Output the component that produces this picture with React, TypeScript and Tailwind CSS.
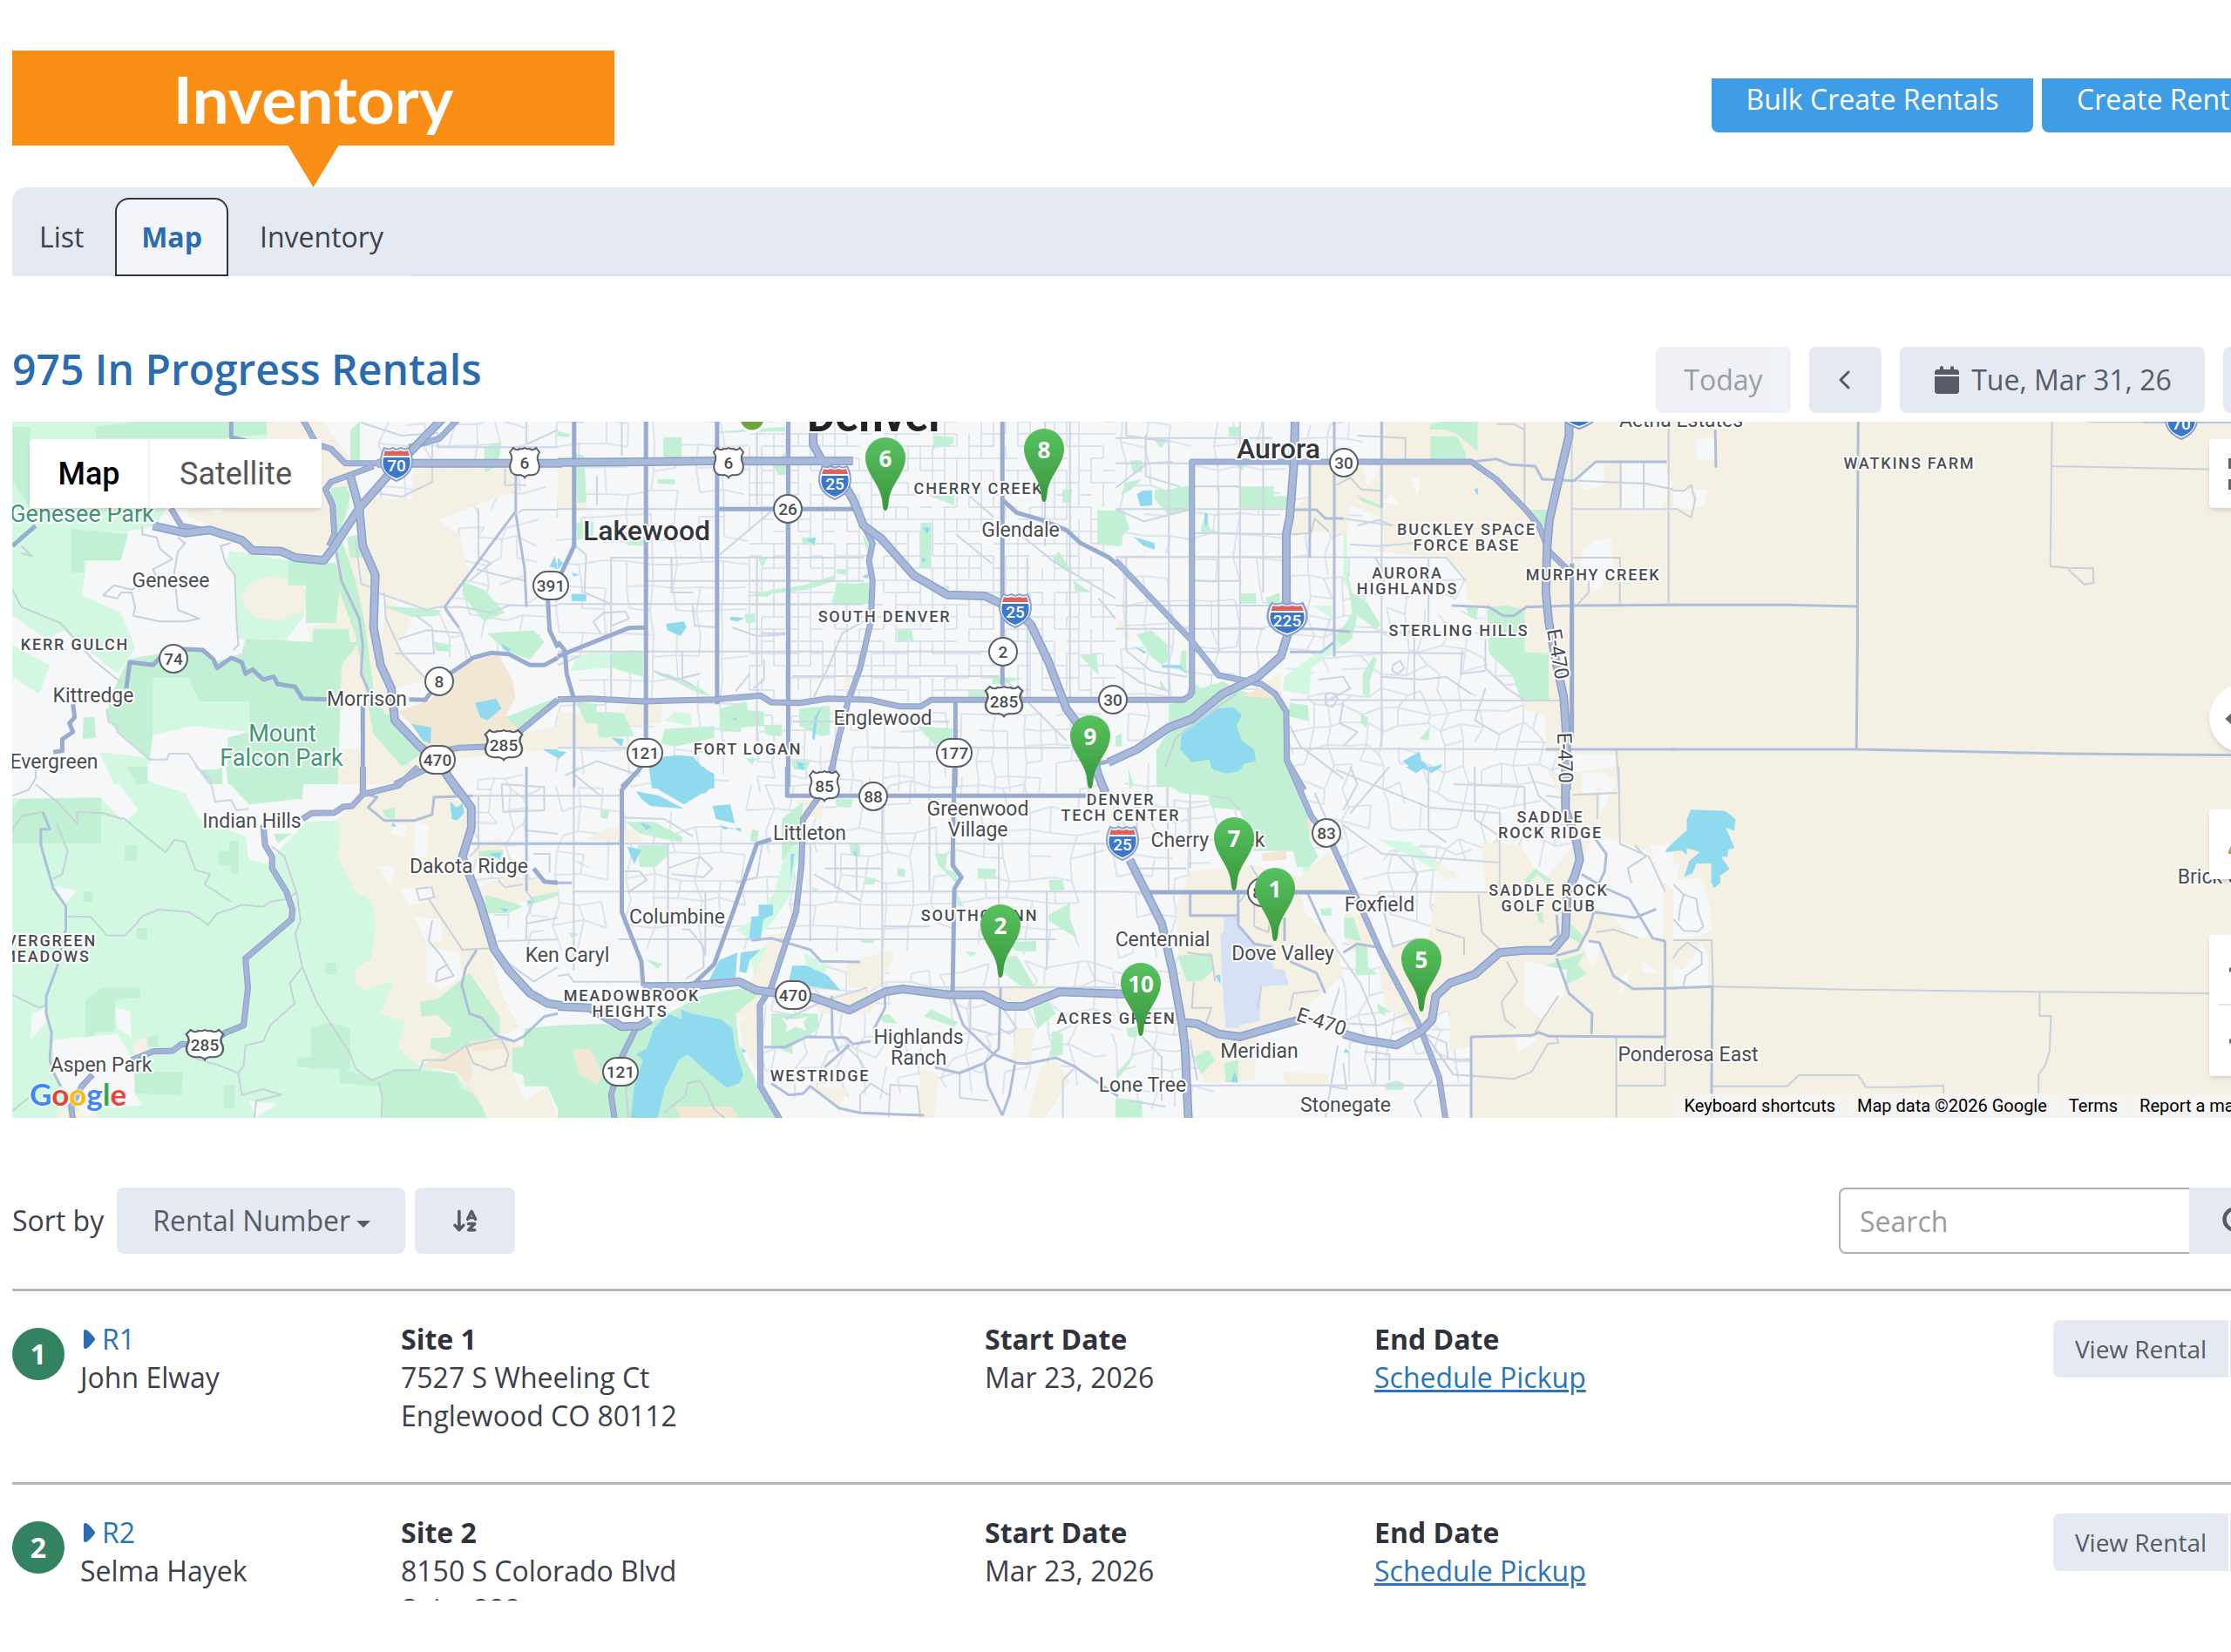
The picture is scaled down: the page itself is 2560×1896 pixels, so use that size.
import { useState } from 'react';
import { FaArrowDownAZ, FaCalendar, FaChevronLeft, FaChevronRight } from 'react-icons/fa6';
import { Search } from 'lucide-react';

type Sheet = {
 x: number;
 y: number;
 meadow?: string[];
 sand?: string[];
 park?: string[];
 tan?: string[];
 land?: string[];
 airport?: string[];
 water?: string[];
 lane?: string[];
 street?: string[];
 county?: string[];
 road?: string[];
 highway?: string[];
 freeway?: string[];
};

// The base map is cut in eight sheets. Each one has its own grid, 2.45 units to a pixel across and 3 down.
const sheets: Sheet[] = [
 {
  x: 0,
  y: 480,
  meadow: [
   '0,0 750,0 750,70 560,100 440,370 360,390 340,490 245,490 230,610 340,670 380,790 330,880 180,730 130,760 0,650',
   '0,760 140,850 110,950 34,890',
   '645,455 810,490 860,600 855,680 800,770 670,760 660,540 635,510',
   '430,895 530,895 560,975 700,975 700,1080 540,1060 430,1090',
   '280,1150 430,1170 380,1260 320,1260',
   '960,240 985,300 950,400 930,250',
  ],
  sand: [
   '750,0 900,0 990,150 1000,190 940,460 820,470 700,440 600,370 530,340 530,310 905,310 905,70 750,70',
   '680,620 700,570 750,545 850,560 860,660 790,695 720,690 690,650',
   '945,460 1010,430 1060,560 1060,720 1100,930 1120,1050 1180,1130 1160,1260 1020,1260 1010,980 955,1000 860,720 940,700',
   '1030,270 1160,280 1160,170 1450,170 1450,250 1340,300 1230,350 1290,400 1320,540 1250,650 1200,660 1070,600 1030,400',
   '1085,610 1160,700 1120,780 1200,900 1110,930 1070,800',
   '960,1140 1180,1130 1290,1260 950,1260',
   '1230,1140 1568,1060 1568,1140 1300,1170',
  ],
  park: [
   '34,30 85,30 85,310 34,210',
   '270,30 450,0 750,0 750,55 600,70 270,70',
   '200,380 360,400 340,490 235,490 235,530 200,530',
   '810,480 945,500 955,570 945,705 860,705 860,575 810,575',
   '690,760 880,770 880,725 980,725 985,770 1010,770 960,850 950,1260 640,1260 640,1100 700,1080 700,975 560,975 530,895 430,895 430,1090 420,1180 330,1080 300,1030 310,960 360,830 450,810 560,790 600,840 680,810',
   '235,1030 265,1030 270,1100 232,1105',
   '930,240 975,235 985,270 955,400 1000,560 1025,700 1050,930 1150,1200 1050,1090 1000,750 955,600 945,450',
   '1070,645 1240,660 1230,680 1160,685',
   '1370,740 1500,730 1530,770 1490,830 1420,800',
   '1220,770 1270,780 1260,805 1225,800',
   '1300,560 1360,590 1420,670 1360,700 1300,610',
   '1420,1030 1568,960 1568,990 1460,1070',
   '985,40 1012,10 1012,145 985,145',
   '1360,100 1410,80 1400,160 1365,190',
   '975,410 1010,400 1020,480 985,480',
   '1050,1000 1110,1030 1190,1150 1130,1200 1060,1100',
   '565,1210 625,1210 625,1260 590,1260',
  ],
  tan: ['1120,1010 1210,970 1300,850 1400,810 1440,900 1450,960 1420,1030 1460,1070 1370,1130 1200,1140 1160,1060'],
  land: ['570,310 640,310 610,330'],
  water: [
   '1335,980 1395,965 1410,1000 1370,1040 1350,1030',
   '1155,1052 1213,1065 1210,1120 1190,1110',
   '1545,510 1560,475 1568,520',
   '1525,1140 1568,1140 1568,1170',
   '1410,775 1435,795 1430,805 1415,795',
  ],
  lane: [
   '650,430 620,440 635,500 660,540 665,700 670,780 655,800',
   '400,370 400,400 440,410 450,450 485,485 430,520 440,545 370,590 320,575 290,610 330,620 340,600 370,600 380,650 375,680 450,700 520,700 560,690 500,660 490,530 500,460 520,430 500,410',
   '35,590 60,650 170,705 260,830 340,910',
   '60,440 90,475 60,465',
  ],
  street: [
   '945,460 960,560 1010,690 1020,780 1015,880 1040,950',
   '300,1000 305,1045 330,1060 330,1080 420,1175 470,1175 475,1155 530,1155 560,1210 590,1260',
   '1450,190 1450,320 1250,650 1290,720 1325,825',
   '1450,330 1475,520 1480,650',
   '1060,600 1200,660 1230,650 1300,650 1380,670 1430,645 1568,645',
   '1450,330 1470,315 1568,315',
   '1080,600 1085,690 1130,810 1200,900',
   '1015,15 1130,60 1230,50 1230,100 1568,100',
   '1215,90 1215,220 1130,270 1070,260 1060,240',
   '1345,310 1345,480 1380,500 1320,560',
   '1340,520 1400,540 1480,560',
   '1420,170 1420,230 1480,230',
   '1480,0 1480,90 1568,40',
   '1120,760 1200,730 1300,740 1250,660',
   '1000,420 1015,570 1060,590',
   '1110,810 1220,810 1215,720 1170,680',
  ],
  county: ['1450,190 1450,320 1250,650 1290,720', '1450,330 1475,520 1480,650', '945,460 960,560 1010,690 1020,780 1015,880 1040,950'],
  road: [
   '355,930 365,840 430,850 460,810 520,795 570,798 600,830 610,860 650,825 680,840 690,880 710,865 740,900 770,890 780,915 830,925 850,965 920,968',
   '1150,968 1195,970 1240,900 1330,825 1380,808 1430,812 1490,850 1530,850 1568,825',
   '205,985 210,1030 195,1050 205,1080 175,1105 175,1145 150,1150',
   '1540,620 1545,730 1568,790',
   '1020,990 1020,1260',
   '35,440 100,370',
   '650,0 650,65 700,80',
  ],
  highway: [
   '850,0 890,90 930,105 970,155 1060,155',
   '925,440 940,400 935,300 915,245 930,220 1050,165',
   '480,310 510,370 590,390',
   '1110,1260 1230,1190',
   '1240,1145 1290,1135 1390,1130 1450,1090 1568,970',
   '1150,100 1235,70 1290,0',
  ],
  freeway: [
   '430,370 520,395 590,385 680,420 710,455 790,458 830,480 910,490 935,450 1010,310 1110,170 1245,0',
   '1060,155 1580,155',
   '985,200 1010,310 1020,440 1055,540 1050,720 1070,850 1100,930 1110,1040 1180,1130 1230,1180 1290,1290',
  ],
 },
 {
  x: 640,
  y: 480,
  sand: [
   '0,130 50,130 70,180 80,210 80,320 0,310',
   '0,1010 110,1020 115,1100 180,1100 215,1130 0,1130',
   '200,980 295,980 290,1050 200,1060 185,1010',
   '810,890 830,890 800,960',
  ],
  meadow: ['35,870 50,830 90,805 150,810 155,860 130,860', '300,1040 330,1010 375,1020 375,1060'],
  park: [
   '297,65 348,65 348,138 297,138', '603,160 645,110 645,195 620,195', '280,210 330,210 330,228 282,225',
   '562,478 590,480 575,515', '685,410 725,410 725,438 690,435', '1020,360 1050,360 1050,515 1020,515',
   '785,565 830,570 875,565 875,640 770,640', '785,520 815,520 815,540 785,535', '955,730 995,728 1000,765 955,765',
   '1055,60 1115,65 1110,90 1055,105', '1040,265 1115,265 1115,300', '1420,245 1447,245 1440,290 1418,290',
   '1517,317 1568,317 1568,440 1517,435', '1390,480 1410,460 1450,540 1420,520', '1450,560 1500,600 1455,598',
   '1465,812 1515,812 1520,885', '1225,890 1310,895 1250,915 1220,915', '1155,940 1200,940 1200,965 1155,965',
   '150,810 200,798 240,805 240,890 155,860', '275,880 310,880 400,930 430,955 400,950 330,905',
   '50,975 110,985 110,1010 185,1015 215,1095 115,1100 110,1050 80,1050',
   '300,1070 440,1060 440,1100 330,1130 290,1120', '455,1000 530,975 535,1005 580,1010 580,1060 515,1065 515,1080 455,1078',
   '580,1055 630,1055 630,1095 585,1090', '678,1000 765,990 765,1090 740,1095 680,1060', '1010,1060 1110,1070 1110,1100 1060,1125',
   '525,675 555,672 555,705 530,705', '455,45 640,30 640,45 455,50', '50,360 100,355 100,415 55,415', '180,420 245,420 245,438 200,438',
   '50,120 75,130 80,290 55,290', '605,590 690,575 780,540 780,560 700,590 600,605 590,615 530,612', '0,45 35,55 30,65 0,62',
   '530,1170 560,1170 545,1195', '655,1180 710,1180 700,1210 665,1210', '855,400 875,430 870,460', '1080,580 1100,575 1100,595',
  ],
  water: [
   '305,708 355,700 362,720 345,750 308,730', '485,683 525,688 505,700 485,695',
   '255,1190 300,1165 340,1160 380,1165 410,1205 440,1225 440,1275 265,1275', '150,1100 185,1105 180,1130',
   '0,480 15,500 0,520', '38,605 80,605 80,630 40,630', '700,418 725,410 720,435', '0,1145 25,1150 0,1175',
   '1025,375 1048,378 1038,398', '1025,475 1035,490 1025,495', '40,530 60,540 45,545', '490,1035 500,1030 505,1042', '670,1180 695,1190 680,1210',
   '715,1100 722,1030 745,990 730,1030 722,1110', '855,545 875,535 870,552',
  ],
  street: [
   '0,313 860,313', '0,640 860,640', '0,803 1240,803', '660,888 1240,888', '180,0 180,130', '150,480 150,960', '148,480 860,480',
   '320,480 320,600 380,600', '560,0 560,300', '110,200 110,300', '250,560 860,560', '115,395 250,395', '455,470 600,320',
   '350,800 350,900 380,920', '570,740 650,740', '580,830 580,900 550,930', '120,740 100,700 130,670 190,665 200,690 150,715',
   '1160,270 1225,340', '1300,400 1390,490 1568,620', '1120,400 1220,500', '1250,890 1430,1110', '720,960 760,860 800,740 860,700',
   '0,850 60,820', '270,870 330,900 400,880', '660,1045 1100,1045', '880,1135 1440,1135', '1440,0 1440,970', '1370,0 1370,440',
   '380,645 385,715 450,720', '490,720 560,750 640,745', '540,880 500,940', '0,1135 240,1135', '20,1230 110,1180 230,1230', '560,480 560,1135',
   '1320,480 1320,960', '1520,620 1568,690', '50,440 80,470 75,600 150,640',
  ],
  road: [
   '46,0 46,440 0,560', '248,0 248,1110', '448,0 448,985', '648,0 648,1270', '1250,0 1250,920', '1118,975 1118,1270',
   '450,313 830,313', '1250,280 1290,325 1360,350 1430,385 1470,430 1550,480 1575,505',
   '0,820 200,722 245,720', '0,770 20,800 25,880 45,965', '230,1210 180,1270', '1520,1190 1568,1175',
  ],
  county: ['46,965 46,1270'],
  highway: [
   '0,968 90,965 240,975 440,968 570,955 600,978 680,980 760,965 880,970 960,992 1020,992 1050,970 1568,970',
   '860,370 885,430 875,490 885,560 880,700 850,860 815,980 790,1100 770,1210',
  ],
  freeway: [
   '0,152 250,150 450,147 600,148 830,147',
   '718,50 718,90 745,150 800,215 830,280 860,370 910,415 1000,540 1095,608 1200,612 1285,660 1330,710 1380,840 1430,1000 1490,1100 1520,1230 1540,1290',
  ],
 },
 {
  x: 1280,
  y: 480,
  sand: [
   '750,0 1570,0 1570,1270 1420,1270 1410,1160 1210,1150 1208,1020 1148,1000 1148,970 1218,970 1050,800 1040,660 985,620 985,545 930,480 730,460 755,420 740,340 660,300 650,400 550,390 495,410 500,310 545,270 540,155 750,155',
   '400,920 465,880 465,960 430,965', '0,690 20,700 45,760 30,765',
  ],
  tan: ['350,955 430,925 465,950 440,965'],
  meadow: ['555,645 608,645 608,690', '475,890 530,840 640,740 665,760 620,800 550,860 545,955 470,935', '640,390 650,400 655,590 640,560'],
  park: [
   '885,20 960,0 1018,0 1018,115 960,55 930,40 885,38', '885,62 960,62 985,120 985,142 885,142', '1160,315 1222,315 1210,400 1195,380',
   '985,650 1015,650 1015,695 995,680', '1045,650 1100,645 1150,660 1150,805 1218,810 1218,970 1140,968 1115,885 1050,810',
   '110,245 155,245 185,235 215,240 215,315 150,332 110,280', '350,235 445,235 445,268 485,270 485,308 350,308',
   '0,318 22,318 40,380 20,405 18,440 0,440', '15,265 30,220 75,210 40,250', '40,145 75,145 75,185 50,190', '105,70 148,72 128,102',
   '318,30 348,30 348,62 318,62', '240,380 255,320 265,380 292,392 242,392', '352,605 395,602 395,638 352,638', '420,620 462,600 462,640 430,640',
   '60,745 100,730 145,780 148,835 130,850 100,820', '645,500 665,600 705,630 745,710 735,725 680,680 665,760 640,780 610,760 640,720 665,670',
   '725,820 735,830 715,900 715,960 695,950 695,880', '490,980 540,988 545,1045 485,1025', '690,1020 710,1030 705,1065 690,1050', '885,1060 880,1110 855,1105',
   '150,985 215,970 210,900 240,930 305,905 330,930 410,960 465,960 480,1000 490,1270 115,1270 115,1140 150,1080',
   '680,265 745,300 745,310 690,285', '335,155 370,155 355,182', '185,800 200,800 200,880 180,860', '0,1095 18,1085 18,1130 0,1130', '125,900 145,935 125,935',
  ],
  land: [
   '1300,220 1340,160 1375,155 1375,230 1320,250', '1422,152 1540,152 1568,230 1535,312 1422,310', '1318,450 1350,420 1395,410 1400,520 1350,600 1300,540',
   '830,210 857,200 850,270', '755,290 775,255 800,305', '690,160 745,165 710,235', '1310,1230 1380,1225 1410,1270 1310,1270',
  ],
  water: [
   '285,1000 330,995 355,1020 340,1060 355,1110 390,1140 395,1180 360,1190 345,1215 310,1222 270,1205 265,1175 215,1185 182,1140 185,1090 250,1030',
   '60,262 75,250 103,248 103,300 70,303', '50,408 110,430 110,452 80,440', '808,1180 855,1148 860,1180 885,1205 918,1190 915,1200 888,1222 865,1200 845,1222',
   '835,805 843,810 843,825', '1008,245 1020,240 1018,268', '250,325 260,330 255,378 250,360', '50,785 90,805 80,810', '130,850 180,850 205,885 180,860 130,858',
  ],
  lane: [
   '1150,15 1150,310', '1555,15 1555,640', '1420,150 1420,310', '1485,150 1485,310', '1300,215 1490,225 1568,245', '1070,20 1120,20 1150,40',
   '1283,480 1418,480 1418,640', '1330,560 1330,600 1300,640', '1408,1140 1415,1270', '680,60 815,68 815,150', '620,230 660,205 690,245 745,250',
   '500,400 550,395 560,345 600,390', '140,1200 170,1100 230,1040 340,950',
  ],
  street: [
   '30,0 30,60 150,80 150,150', '85,60 85,200 180,235', '150,150 150,970', '0,68 440,68', '0,155 215,155', '215,235 350,235', '0,313 500,313',
   '290,235 290,800', '350,0 350,900', '415,0 415,600', '215,395 500,400', '0,478 480,478', '215,560 350,560', '0,645 480,645', '0,725 420,725',
   '215,805 460,805', '0,240 90,155 160,150', '0,313 80,355 215,313', '500,478 930,480 985,560', '490,970 1250,972', '470,1137 1210,1140',
   '880,480 880,720 800,740', '748,310 748,1130', '840,730 840,970', '660,735 1000,740', '615,805 980,810', '680,370 740,350 780,370', '1283,70 1283,500',
   '1285,313 1568,313', '640,345 780,370', '660,435 740,440 880,425', '730,480 760,540 740,600', '975,800 970,880 1040,870', '1040,760 1040,860 1100,930 1150,970',
   '570,900 640,890 660,930 600,970', '750,890 860,900 930,890 1000,950', '1040,930 1010,1040 1080,1090', '30,480 30,800 100,870 200,890', '0,850 70,910 150,940',
   '780,850 800,835 812,860 795,880 778,870 780,850', '590,950 610,945 625,965 610,995 590,985 590,950', '490,1060 520,1130 640,1240', '640,980 630,1050 680,1080 640,1130',
  ],
  county: [
   '945,645 1050,650 1090,680 1120,680 1155,650 1285,645 1575,643', '1210,1140 1575,1140', '490,725 560,725 660,735', '490,805 580,805 615,770',
   '500,315 565,315 590,345 640,345', '546,150 546,480', '615,0 615,820', '748,0 748,310', '1000,150 1070,140 1110,160 1180,165 1200,210 1290,215 1350,150 1550,150',
  ],
  highway: [
   '215,950 215,150 1000,150 1070,210 1150,310 1190,370 1220,460 1270,520', '0,970 190,970 210,955 215,930',
   '0,490 210,760 290,885 410,915 450,950 480,1010 482,1180 530,1280',
  ],
  road: ['1283,500 1283,1100'],
  freeway: [
   '505,0 502,150 490,340 480,400 480,640 485,740 465,820 400,890 300,950 215,1035 150,1065 60,1140 -20,1185',
   '1275,0 1275,60 1250,190 1220,350 1213,450 1210,600 1218,700 1240,850 1260,960 1268,1100 1268,1280',
  ],
 },
 {
  x: 1920,
  y: 480,
  sand: ['-5,-5 1800,-5 1800,1280 -5,1280'],
  land: ['62,70 115,70 115,143 68,143', '0,250 40,240 60,310 0,310', '60,245 97,243 90,295 60,310'],
  lane: [
   '1065,0 1060,510 1110,515 1180,517 1182,567 1155,572 1110,520', '1065,165 1568,177', '1165,13 1320,13', '0,250 30,250 50,230 62,280 50,342 10,312 0,312',
  ],
  county: ['520,0 518,465 518,760 515,1140', '-5,643 320,643 518,648', '-5,1140 515,1140 730,1145 1100,1155 1600,1160', '118,40 120,170', '1320,13 1600,13'],
 },
 {
  x: 0,
  y: 880,
  meadow: [
   '300,0 420,50 520,90 560,180 690,240 700,320 750,335 860,190 950,185 960,220 950,310 1000,430 1045,460 1058,540 1045,660 1000,700 1000,740 1020,768 1110,735 1070,850 1140,880 1120,960 1180,1030 1280,1060 1340,1130 1380,1215 0,1215 0,110 280,105 350,190 390,150',
  ],
  sand: [
   '950,180 1010,110 1120,60 1180,20 1250,40 1320,130 1325,200 1290,320 1340,470 1380,640 1410,780 1460,900 1400,930 1280,980 1250,1000 1180,1020 1150,1010 1120,960 1140,880 1070,850 1110,735 1020,768 1000,740 1000,700 1045,660 1058,540 1045,460 1000,430 950,310 960,220',
   '1330,420 1420,380 1568,400 1568,430 1430,480 1350,430', '1180,1030 1310,960 1420,930 1470,960 1440,1050 1475,1150 1540,1100 1568,1215 1370,1215 1340,1130 1280,1050',
   '1330,270 1410,240 1410,290 1330,320', '375,950 410,930 430,1000 375,990', '165,1180 270,1180 270,1215 165,1215',
  ],
  tan: ['1180,1030 1310,960 1330,1060 1310,1100 1350,1160 1340,1130 1280,1050', '1320,945 1410,935 1430,970 1330,980'],
  park: [
   '55,110 285,108 285,265 34,265 34,150', '635,0 920,0 920,30 855,35 850,110 700,130 640,50', '570,30 625,0 625,60',
   '1180,810 1230,800 1320,710 1405,860 1405,920 1340,960 1250,990 1210,970 1210,935 1265,930 1270,900 1230,855 1185,860',
   '1475,900 1568,890 1568,1180 1540,1100 1475,1100 1470,1060 1440,1050 1440,970 1470,965',
   '955,1035 1060,1080 1110,1040 1280,1055 1300,1110 1340,1130 1370,1215 1080,1215 1070,1100 955,1090', '375,1050 515,1050 510,1130 375,1125',
   '240,800 290,760 395,760 395,795 325,800 320,910 265,915 265,945 240,940', '875,900 930,880 985,900 985,1040 875,1040', '350,270 385,270 385,325 350,325',
   '615,290 645,290 645,255 670,255 670,370 650,370 650,340 615,340', '385,555 415,555 415,595 385,595', '915,675 945,675 945,715 915,715',
   '235,430 260,430 260,465 235,465', '835,1000 875,1000 875,1035 835,1035', '630,1095 660,1095 660,1175 630,1175', '1345,290 1415,285 1415,320 1345,320',
   '1365,440 1470,480 1430,505 1365,505', '1490,450 1568,430 1568,445 1480,480', '1075,150 1110,140 1110,180 1085,175', '415,930 445,920 445,965 415,965', '355,0 415,0 415,60 385,60', '770,230 820,230 780,265',
  ],
  land: [
   '1165,515 1240,525 1240,600 1200,610', '1200,620 1290,640 1300,720 1240,770 1200,740', '150,940 330,920 375,1010 380,1130 400,1165 270,1180 240,1208 200,1130 150,1060',
   '325,830 365,840 370,930 330,900', '155,412 215,425 185,470', '1125,420 1220,410 1220,460 1150,480', '1060,340 1110,345 1100,415', '1165,190 1205,200 1200,310 1165,310',
   '90,850 130,830 130,880 85,940', '700,1150 780,1160 720,1208', '1100,190 1145,200 1140,240 1100,235',
  ],
  water: ['1265,120 1285,140 1300,125 1305,160 1285,185 1270,180', '1375,300 1410,295 1405,315 1390,310', '1405,485 1430,490 1420,502', '1480,465 1495,460 1490,475', '1100,205 1105,190 1115,208'],
  lane: [
   '190,515 255,517 300,580 350,582 380,545 400,515 445,492 530,500 570,530 585,545 610,505 650,490 680,475 740,482 760,465 810,455 835,430',
   '345,175 465,295 490,252 520,258 550,355 590,370 575,405 650,465', '160,195 190,290 175,370 150,385', '220,200 215,155 290,160 345,180',
   '765,275 800,310 835,440 845,530 830,575 850,690 890,810 985,990 1000,1040 1045,1080 1110,1045 1180,1045 1190,1010 1250,1010 1310,960 1410,935 1440,945',
   '850,690 815,745 828,815 760,890 740,945 690,960 685,1030 670,1055 680,1130 740,1110 790,1130 720,1150 715,1215', '1065,1085 1075,1140 1072,1215',
   '35,785 110,830 130,820', '540,1000 620,1030 670,1055', '35,100 80,80 100,40 100,0', '35,220 60,170 120,155', '100,60 160,120 220,200', '35,1185 80,1140',
   '1310,960 1330,1020 1380,1045 1420,1030 1430,990 1410,940', '1205,455 1300,630 1385,625', '1170,420 1215,415 1220,450 1180,460 1170,420',
   '1215,530 1205,600 1240,650 1275,720 1225,740 1230,700 1260,680',
  ],
  street: [
   '550,0 590,40 605,120 650,115 665,150 700,145', '1330,100 1568,100', '1345,100 1345,280 1320,310',
   '1480,430 1500,460 1480,520 1480,600', '1400,600 1568,595', '1400,650 1500,740 1568,690', '1410,60 1530,70 1530,150 1415,155 1410,60', '1480,220 1568,230',
   '1500,300 1545,300 1545,365', '1400,390 1420,415 1470,405', '1480,540 1568,520',
  ],
  county: [
   '120,155 140,215 115,215 115,270 150,420 185,480 185,560 160,690 130,790 130,850 145,915 140,1010 150,1050 170,1100',
   '1030,95 1060,105 1035,140 1080,185 1165,185 1215,165 1220,105 1330,100',
   '1340,630 1310,690 1298,750 1320,850 1355,865 1395,925 1445,945 1470,930 1530,860 1568,850',
   '1325,265 1568,265', '1480,0 1480,430',
  ],
  road: ['1500,350 1530,395 1568,400'],
  highway: [
   '740,200 745,270 765,310 765,350 805,430 822,490 820,525 690,660 697,760 685,890 635,915 580,960 510,955 485,978 430,980 370,1010',
   '260,1060 230,1100 200,1170 205,1215', '1020,0 1020,95', '1175,0 1120,65 1020,95 990,135 965,138 940,158 875,160 850,180',
  ],
  freeway: ['1240,0 1325,140 1325,210 1300,310 1350,470 1390,630 1430,700 1490,780 1540,815 1580,822'],
 },
 {
  x: 640,
  y: 880,
  sand: [
   '600,580 640,570 590,760 540,760', '510,880 570,830 565,1060 520,960', '810,680 940,630 945,660 900,760 820,760', '700,790 910,770 880,850 740,850',
   '1100,760 1390,750 1330,830 1250,830 1200,790', '1290,900 1340,900 1330,1010 1275,1010', '1020,1040 1070,1060 1060,1208 1010,1208',
   '1360,1030 1400,1010 1440,1080 1370,1208 1320,1208', '80,250 140,210 220,220 240,260', '700,1100 820,1110 790,1170', '475,820 520,800 560,780 570,840 500,870', '670,120 750,110 740,180 700,170',
  ],
  meadow: ['670,250 690,300 670,330 650,450 600,540 545,600 500,560 560,520 610,430 640,290', '540,660 600,600 560,740', '30,0 60,0 60,20', '690,640 760,680 750,720 700,690'],
  park: [
   '0,890 130,885 220,910 260,880 310,850 400,790 470,770 540,760 560,790 500,850 510,960 540,1040 570,1110 615,1215 0,1215',
   '600,850 730,850 735,900 660,960 660,990 600,960', '630,180 690,120 680,240 630,325', '190,190 270,190 350,240 350,260 300,250 230,230',
   '225,270 310,268 310,305 275,345 230,345', '1060,298 1095,300 1090,350 1125,370 1120,400 1070,340', '1180,350 1232,352 1230,388 1182,385',
   '955,348 978,355 975,380 955,375', '1380,390 1420,390 1425,425 1385,425', '1380,510 1440,470 1440,520 1460,590 1380,530',
   '1245,660 1290,650 1340,755 1300,755 1245,700', '1265,605 1345,600 1345,635 1290,635', '905,860 930,850 955,885 915,880', '1030,860 1050,835 1125,880 1115,895',
   '1335,830 1380,810 1400,850 1350,900', '1390,910 1420,920 1420,990 1385,1000', '780,110 830,110 825,140 785,138', '820,265 850,270 850,310 825,305',
   '865,385 895,385 890,405 865,405', '850,592 890,595 885,608 855,605', '1150,635 1180,640 1160,655', '545,215 565,220 560,260 540,255', '245,660 295,680 280,695', '50,320 95,350 60,335', '120,150 145,150 140,180 120,175',
   '1120,430 1140,480 1125,480', '30,570 60,575 40,590', '715,415 735,422 720,430',
  ],
  land: ['630,865 665,870 705,860 690,880 700,910 670,895 640,915 645,890'],
  tan: ['42,975 90,970 125,1060 110,1095 60,1060', '330,1170 490,1170 510,1215 350,1215'],
  water: [
   '255,0 410,0 440,40 438,65 415,90 400,95 355,130 285,80', '220,85 285,100 355,145 260,135 235,110', '435,135 485,130 498,195 445,180', '455,200 480,210 470,218', '500,210 515,212 512,225', '195,275 235,285 215,335',
   '230,190 262,205 250,218', '565,475 605,475 605,510 578,525 570,598 538,590 545,515 565,515', '455,665 505,640 500,725 425,735', '515,640 570,630 540,665 530,710 510,705',
   '660,685 700,685 760,720 795,770 700,755 650,735', '345,835 375,850 460,870 490,900 500,980 522,1060 510,1090 475,1105 410,1040 365,990 340,1010 300,1110 280,1215 205,1215 215,1100 240,1010 220,990 250,970 270,900 310,850 350,870',
   '655,300 665,300 655,390', '515,965 530,980 520,985', '830,290 845,300 835,310', '670,0 695,0 690,12',
  ],
  lane: ['300,1190 360,1130 365,1090 400,1080 420,1120 440,1180 470,1210', '190,1090 200,1215'],
  street: [
   '0,265 1568,265', '40,430 1568,430', '170,594 1400,594', '915,760 1568,760', '0,100 180,100', '45,0 45,700', '310,265 310,745', '415,430 415,650', '710,265 710,600',
   '912,100 912,760', '1045,100 1045,430', '1240,265 1240,760', '1375,430 1375,700', '1510,265 1510,740', '1115,430 1110,450', '0,720 30,715 45,740 230,740',
   '310,350 400,310 435,350 410,380 320,370', '720,370 850,460', '840,265 840,430', '780,265 780,420', '350,560 370,560 410,620 410,690 360,730', '180,360 230,360 250,390 200,430', '915,550 1045,550',
   '575,265 560,380 500,400', '1130,1060 1130,1140 1210,1150', '930,1208 935,1095 1010,1100 1020,1208', '750,350 912,350', '40,20 120,100', '1420,1208 1420,1080 1450,1040', '180,175 300,180 380,240', '850,1190 850,1130 880,1090 930,1130',
   '640,870 740,810 870,760', '1160,800 1160,900 1220,920', '1250,830 1290,900 1270,920 1240,900', '810,960 850,1010 870,1060',
  ],
  county: [
   '0,400 40,400', '545,598 600,590 640,605 710,630 740,670 850,672', '1110,790 1140,890 1225,990 1290,1020 1320,1022 1400,1002 1450,1030 1575,1135',
   '1245,760 1240,970 1200,1020 1130,1055 1060,1035', '580,965 640,965 700,930 810,932 830,955 880,945', '600,1090 650,1130 690,1125 710,1100 790,1175 850,1192 1030,1200',
   '1200,1020 1210,1100 1250,1200', '1285,1025 1270,1130 1250,1200', '920,780 920,830 890,900 900,960', '770,790 772,930 790,980', '820,958 750,1035', '0,265 180,265',
  ],
  road: [
   '235,0 180,80 180,500 235,670 240,755', '645,0 645,100 1490,100', '1115,0 1110,340 1135,380 1115,420 1110,780', '600,250 560,265 490,510 440,680 380,750',
  ],
  highway: ['770,0 765,60 730,110 690,180 685,340 670,500 600,760 568,820 570,1100 625,1215', '220,900 180,1000 150,1130 160,1215'],
  freeway: ['0,825 90,830 180,895 230,893 260,870', '240,757 370,755 510,740 560,770 620,780 720,795 820,838 920,775 970,765 1100,785 1195,785 1260,825 1310,825 1410,775 1580,782'],
 },
 {
  x: 1280,
  y: 880,
  sand: [
   '170,480 210,360 390,340 520,380 600,290 650,420 520,430 530,500 620,600 640,720 560,800 510,860 400,920 390,1080 250,1090 200,900 180,700',
   '900,430 1040,430 1030,260 1140,270 1200,400 1300,250 1420,270 1570,330 1570,1215 1000,1215 1000,960 940,980 940,840 880,840 870,930 760,830 740,700 780,610 880,590',
   '1210,0 1280,60 1280,20 1410,0 1570,0 1570,330 1420,260 1290,200', '640,500 720,520 720,620 660,640', '890,330 920,340 970,380 930,390', '470,1050 600,1060 600,1100 480,1098',
  ],
  park: [
   '120,0 482,0 540,150 545,250 570,310 545,345 510,345 500,290 390,290 350,150 270,140 260,100 180,90 150,60',
   '175,650 270,640 275,700 245,735 200,740', '575,490 607,485 607,512 580,512', '643,520 670,520 690,600 643,590', '675,615 708,620 710,690 740,715 675,718',
   '735,815 765,835 755,858 740,845', '220,1000 260,975 280,1010 240,1060', '305,1020 345,1010 345,1088 310,1085', '760,1090 790,1080 810,1090 808,1112 760,1112',
   '1280,540 1320,590 1310,610 1280,590', '1150,670 1200,690 1240,670 1320,640 1300,680 1325,715 1260,755 1220,700 1180,740 1160,720',
   '0,1060 60,975 40,1020 10,1070', '0,1140 75,1150 75,1208 0,1208', '30,900 60,895 60,930 35,930', '1150,390 1180,350 1225,390 1215,405 1185,370 1160,405', '1180,490 1200,500 1205,540 1190,530', '35,0 50,60 40,80',
  ],
  meadow: ['735,250 830,260 920,340 920,370 850,320', '525,345 560,345 530,385'],
  land: [
   '1310,20 1350,20 1350,90 1310,90', '1370,30 1410,50 1360,170', '1350,230 1500,290 1540,400 1540,590 1460,590 1400,520 1330,470 1290,380',
   '1150,670 1270,700 1260,790 1200,870 1150,820', '1125,930 1190,940 1130,985', '1480,670 1530,710 1485,710', '1415,730 1450,700 1420,790', '1500,270 1568,265 1568,420 1540,400', '1310,600 1370,610 1340,700',
  ],
  airport: ['305,515 345,515 345,545 390,610 440,665 445,695 475,700 487,750 410,757 405,875 350,890 345,900 310,900 300,750 295,575 305,570'],
  tan: ['410,300 480,285 480,320 415,325', '535,180 550,180 550,240'],
  water: ['270,0 358,0 345,15 310,22 275,10', '815,0 918,0 888,22 865,5 845,22', '280,720 295,715 295,750', '325,1085 335,1050 345,1085', '640,985 648,970 657,985', '1545,290 1568,265 1568,290'],
  lane: [
   '1408,930 1408,1215', '1410,1098 1545,1098 1545,930', '870,920 950,1060 1120,1075 1170,1050 1215,955 1245,950 1240,930', '1410,90 1285,97', '1355,97 1355,180',
   '1415,0 1418,265 1500,310 1545,430', '1020,440 1030,570 1090,640', '900,560 980,590 980,650', '1100,670 1130,740 1085,810 1095,870 1125,900', '1245,790 1200,870 1180,915',
   '740,430 780,620 850,590', '380,340 400,380 340,480', '410,757 400,830', '220,740 215,830 270,830 250,900 215,890', '490,840 500,780 570,770', '390,440 390,550 430,570 440,440', '210,940 230,1080',
   '1460,270 1490,310 1440,350 1450,400', '1470,590 1400,560 1350,570', '200,640 270,650 280,740',
  ],
  street: [
   '200,1097 1000,1097', '720,1007 1000,1007', '270,100 320,110 350,150', '740,430 1050,432', '590,570 690,750 730,870 735,930 730,1095', '630,760 600,880 740,890 840,840', '625,960 590,1208',
   '870,920 930,950 935,1010', '0,430 80,432', '770,0 660,160', '620,10 880,140 1080,160', '640,200 750,300 1080,330', '880,0 880,220 930,260', '1010,0 1010,180 1080,240', '1080,160 1080,430', '950,60 1150,70 1150,240',
   '1210,100 1280,110', '560,90 600,200 640,250', '660,0 680,60 640,150', '790,300 850,370 830,430', '0,100 60,100 60,250', '145,70 150,430', '60,350 200,350', '210,90 210,350', '75,930 130,1000 130,1150', '40,1150 140,1170', '860,1208 840,1150 890,1080', '640,1020 650,1110 600,1100',
   '700,980 770,990 770,1080', '1160,0 1190,100 1280,190',
  ],
  county: [
   '540,435 590,570', '490,670 565,710 590,780', '210,432 210,512 345,512', '475,520 475,600', '1330,600 1360,605 1400,720 1455,765 1575,762',
   '1240,660 1275,780 1340,850 1338,920', '1000,1215 1000,930 1170,925 1190,915 1220,928 1545,930 1545,600', '1350,250 1380,300 1375,360 1360,400', '1240,510 1245,580 1220,600', '640,640 680,610 730,620',
   '1240,650 1300,630 1330,560 1345,500 1460,520 1520,490', '1310,370 1380,420 1445,455 1510,590 1545,600', '345,432 345,545 390,610 440,620',
  ],
  highway: ['484,-20 490,0 550,170 610,270 670,430 750,650 850,880 910,1070 928,1215'],
  road: ['75,432 670,432'],
  freeway: [
   '40,320 130,540 160,700 185,870 195,960 205,1215', '180,880 230,885 290,920 350,930 420,905 520,870',
   '640,920 700,940 790,958 860,910 890,870 900,790 940,745 1010,715 1080,640 1150,632 1230,632 1265,580 1270,430 1290,380 1305,320 1295,250', '1265,0 1265,150 1290,230', '0,782 60,782',
  ],
 },
 {
  x: 1920,
  y: 880,
  sand: ['-5,-5 1800,-5 1800,1230 -5,1230'],
  land: ['0,340 20,330 10,390 75,380 105,480 108,560 80,580 30,590 0,590', '0,690 30,700 80,610 98,660 98,755 0,755'],
  water: ['50,148 145,152 175,180 172,220 148,210 172,280 155,285 152,310 135,310 158,352 132,375 132,400 115,418 107,400 107,333 65,333 55,365 30,380 45,325 75,293 38,280 38,302 22,288 -20,295 -20,285 0,260 38,220 38,180'],
  lane: [
   '0,597 108,597 112,757', '1030,775 1030,858 1062,858 1058,980 1045,1030 1027,1060 1027,1215', '107,1100 320,1100 353,1062 520,1062 542,1103 630,1103 760,1098 760,1215',
   '0,405 30,440 65,455 70,500 85,550 70,567 30,565 0,525', '0,660 15,630 40,605 80,640 80,680 35,720 28,755', '110,757 500,767 1030,775 1600,782', '30,440 20,480 15,530',
  ],
  county: ['0,762 110,757 107,1215'],
 },
];

const areaLayers = [
 { key: 'meadow', fill: '#d3f8e2' },
 { key: 'sand', fill: '#f5f0e4' },
 { key: 'park', fill: '#c2f0d4' },
 { key: 'tan', fill: '#f2e6d4' },
 { key: 'land', fill: '#f6f7f8' },
 { key: 'airport', fill: '#d7e1f5' },
 { key: 'water', fill: '#8fdaee' },
] as const;

const lineLayers = [
 { key: 'lane', stroke: '#c8d0dc', width: 2 },
 { key: 'street', stroke: '#cbd5e4', width: 2 },
 { key: 'county', stroke: '#afbfdb', width: 3 },
 { key: 'road', stroke: '#98abd0', width: 5 },
 { key: 'highway', stroke: '#8ba0cb', width: 7 },
 { key: 'highway', stroke: '#a4b4d7', width: 5 },
 { key: 'freeway', stroke: '#8ba0cb', width: 10 },
 { key: 'freeway', stroke: '#a9b9da', width: 7 },
] as const;

// Residential streets: x, y, width, height, block size, bend
const suburbs = [
 [860, 484, 430, 330, 14, 0],
 [640, 484, 220, 410, 27, 3],
 [1290, 484, 190, 480, 26, 5],
 [1480, 660, 330, 340, 22, 8],
 [1480, 484, 100, 180, 22, 4],
 [640, 900, 640, 210, 27, 6],
 [870, 1110, 410, 160, 24, 9],
 [870, 820, 410, 90, 18, 2],
 [545, 890, 95, 210, 20, 6],
 [440, 484, 200, 110, 26, 7],
 [510, 600, 130, 160, 22, 7],
 [1280, 920, 110, 360, 22, 5],
 [1540, 980, 200, 280, 26, 10],
 [1740, 1010, 180, 180, 24, 10],
];

function drawSuburb([x, y, w, h, block, bend]: number[]) {
 let seed = x * 7 + y * 13;
 const random = () => {
  seed = (seed * 1103515245 + 12345) % 2147483648;
  return seed / 2147483648;
 };
 const cols = Math.floor(w / block);
 const rows = Math.floor(h / block);
 const nodes = Array.from({ length: rows + 1 }, (_, r) =>
  Array.from({ length: cols + 1 }, (_, c) => [
   Math.round(x + c * block + (random() - 0.5) * 2 * bend),
   Math.round(y + r * block + (random() - 0.5) * 2 * bend),
  ])
 );
 let d = '';
 for (let r = 0; r < rows; r++) {
  for (let c = 0; c < cols; c++) {
   if (random() < 0.66) d += `M${nodes[r][c]}L${nodes[r][c + 1]}`;
   if (random() < 0.66) d += `M${nodes[r][c]}L${nodes[r + 1][c]}`;
  }
 }
 return d;
}

const towns: [string, number, number][] = [
 ['Genesee', 196, 674], ['Kittredge', 107, 806], ['Morrison', 421, 810], ['Evergreen', 62, 882], ['Glendale', 1171, 616],
 ['Englewood', 1013, 832], ['Aetna Estates', 1929, 490], ['Indian Hills', 289, 950], ['Dakota Ridge', 538, 1002],
 ['Ken Caryl', 651, 1104], ['Aspen Park', 116, 1230], ['Columbine', 777, 1060], ['Littleton', 929, 964], ['Greenwood', 1122, 936],
 ['Village', 1122, 960], ['Highlands', 1054, 1198], ['Ranch', 1054, 1222], ['Cherry Creek', 1386, 972], ['Centennial', 1334, 1086],
 ['Dove Valley', 1472, 1102], ['Foxfield', 1583, 1046], ['Meridian', 1445, 1214], ['Lone Tree', 1311, 1253], ['Stonegate', 1544, 1276],
 ['Ponderosa East', 1937, 1218], ['Brick Center', 2561, 1014],
];

const districts: [string, number, number][] = [
 ['KERR GULCH', 86, 746], ['CHERRY CREEK', 1123, 567], ['SOUTH DENVER', 1015, 714], ['FORT LOGAN', 858, 866], ['BUCKLEY SPACE', 1683, 614],
 ['FORCE BASE', 1683, 632], ['AURORA', 1615, 664], ['HIGHLANDS', 1615, 682], ['MURPHY CREEK', 1828, 666], ['STERLING HILLS', 1674, 730],
 ['WATKINS FARM', 2191, 538], ['EVERGREEN', 53, 1086], ['MEADOWS', 53, 1104], ['MEADOWBROOK', 725, 1149], ['HEIGHTS', 723, 1167],
 ['SOUTHGLENN', 1124, 1057], ['WESTRIDGE', 941, 1241], ['ACRES GREEN', 1281, 1175], ['DENVER', 1286, 924], ['TECH CENTER', 1286, 942],
 ['SADDLE', 1779, 944], ['ROCK RIDGE', 1779, 962], ['SADDLE ROCK', 1777, 1028], ['GOLF CLUB', 1777, 1046],
];

const stateRoutes: [string, number, number][] = [
 ['26', 904, 584], ['74', 199, 756], ['8', 504, 782], ['2', 1151, 748], ['30', 1277, 803], ['30', 1542, 531], ['88', 1002, 914],
 ['83', 1522, 956], ['88', 1448, 1024], ['391', 632, 672], ['470', 502, 872], ['121', 740, 864], ['177', 1095, 864], ['470', 910, 1142], ['121', 712, 1230],
];

const usRoutes: [string, number, number][] = [
 ['6', 602, 531], ['6', 836, 531], ['285', 578, 855], ['285', 1152, 805], ['85', 946, 902], ['285', 235, 1199],
];

const interstates: [string, number, number][] = [
 ['70', 455, 532], ['25', 958, 553], ['25', 1165, 700], ['25', 1288, 967], ['225', 1477, 710], ['470', 1812, 472], ['70', 2503, 484],
];

const pins: [number, number, number][] = [
 [6, 1016, 585], [8, 1198, 575], [9, 1251, 904], [7, 1416, 1021], [2, 1148, 1121], [1, 1463, 1079], [5, 1631, 1160], [10, 1309, 1188],
];

function BaseMap() {
 return (
  <svg
   viewBox="14 484 2620 799"
   preserveAspectRatio="xMinYMin slice"
   className="block h-full w-full bg-[#f6f7f8] font-['Roboto',sans-serif]"
   role="img"
   aria-label="Map of rentals around Denver"
  >
   <defs>
    <linearGradient id="pin" x1="0" y1="0" x2="0" y2="1">
     <stop offset="0" stopColor="#57c25f" />
     <stop offset="1" stopColor="#3a963d" />
    </linearGradient>
   </defs>

   <path d={suburbs.map(drawSuburb).join('')} fill="none" stroke="#dce3ed" strokeWidth="2" />

   {areaLayers.map(({ key, fill }) => (
    <g key={key} fill={fill}>
     {sheets.map((s, i) => (
      <path key={i} transform={`translate(${s.x} ${s.y}) scale(${1 / 2.45} ${1 / 3})`} d={(s[key] ?? []).map((p) => `M${p}Z`).join('')} />
     ))}
    </g>
   ))}

   {lineLayers.map(({ key, stroke, width }, n) => (
    <g key={n} fill="none" stroke={stroke} strokeWidth={width} strokeLinejoin="round">
     {sheets.map((s, i) => (
      <path
       key={i}
       vectorEffect="non-scaling-stroke"
       transform={`translate(${s.x} ${s.y}) scale(${1 / 2.45} ${1 / 3})`}
       d={(s[key] ?? []).map((p) => `M${p}`).join('')}
      />
     ))}
    </g>
   ))}

   <circle cx="863" cy="480" r="15" fill="#6fa33c" stroke="#fff" strokeWidth="3" />

   <g textAnchor="middle" className="fill-[#4a4d52] stroke-white stroke-[4px] [paint-order:stroke] [stroke-linejoin:round]">
    <g className="text-[23px]">
     {towns.map(([name, x, y]) => <text key={name} x={x} y={y}>{name}</text>)}
     <text transform="translate(1780 752) rotate(80)">E-470</text>
     <text transform="translate(1788 870) rotate(88)">E-470</text>
     <text transform="translate(1514 1180) rotate(18)">E-470</text>
    </g>
    <g className="text-[18px] font-medium tracking-widest">
     {districts.map(([name, x, y]) => <text key={name} x={x} y={y}>{name}</text>)}
    </g>
    <g className="fill-[#33363b] text-[32px] font-medium">
     <text x="742" y="620">Lakewood</text>
     <text x="1467" y="526">Aurora</text>
    </g>
    <text x="1005" y="495" className="fill-[#202226] text-[50px] font-bold">Denver</text>
    <g className="fill-[#3f9873] text-[27px]">
     <text x="324" y="851">Mount</text>
     <text x="323" y="879">Falcon Park</text>
     <text x="94" y="599">Genesee Park</text>
    </g>
   </g>

   <g textAnchor="middle" className="text-[19px] font-medium">
    {stateRoutes.map(([name, x, y], i) => (
     <g key={i}>
      <rect x={x - (name.length > 2 ? 20 : 16)} y={y - 16} width={name.length > 2 ? 40 : 32} height="32" rx="16" fill="#fff" stroke="#5b5f66" strokeWidth="2" />
      <text x={x} y={y + 7} fill="#4a4d52">{name}</text>
     </g>
    ))}
    {usRoutes.map(([name, x, y], i) => (
     <g key={i}>
      <path
       transform={`translate(${x} ${y}) scale(${name.length > 2 ? 1.25 : 1} 1)`}
       d="M-13,-17 Q-9,-13 -6,-16 Q-3,-15 0,-17 Q3,-15 6,-16 Q9,-13 13,-17 L17,-12 Q13,-6 16,0 Q18,6 15,11 Q12,15 5,14 Q1,15 0,17 Q-1,15 -5,14 Q-12,15 -15,11 Q-18,6 -16,0 Q-13,-6 -17,-12 Z"
       fill="#fff"
       stroke="#5b5f66"
       strokeWidth="2"
      />
      <text x={x} y={y + 7} fill="#4a4d52">{name}</text>
     </g>
    ))}
    {interstates.map(([name, x, y], i) => (
     <g key={i}>
      <g transform={`translate(${x} ${y}) scale(${name.length > 2 ? 1.25 : 1} 1)`}>
       <path d="M-14,-18 Q-9,-15 -5,-18 L0,-16 L5,-18 Q9,-15 14,-18 Q20,-6 17,4 Q14,14 0,20 Q-14,14 -17,4 Q-20,-6 -14,-18Z" fill="#fff" stroke="#8ba0cb" strokeWidth="2" />
       <path d="M-15,-7 H15 Q17,2 13,8 Q9,14 0,17 Q-9,14 -13,8 Q-17,2 -15,-7Z" fill="#3b78ca" />
       <path d="M-13,-15 Q-9,-13 -5,-15 L0,-14 L5,-15 Q9,-13 13,-15 L15,-9 H-15 Z" fill="#e0605c" />
      </g>
      <text x={x} y={y + 9} fill="#fff">{name}</text>
     </g>
    ))}
   </g>

   <g textAnchor="middle" className="font-['Open_Sans',sans-serif] text-[26px] font-bold">
    {pins.map(([n, x, y]) => (
     <g key={n} transform={`translate(${x} ${y})`}>
      <path d="M0,1 C-3,1 -3,-5 -4,-12 C-7,-30 -23,-42 -23,-60 A23,23 0 0 1 23,-60 C23,-42 7,-30 4,-12 C3,-5 3,1 0,1 Z" fill="url(#pin)" />
      <text y="-49" fill="#fff">{n}</text>
     </g>
    ))}
   </g>
  </svg>
 );
}

const mapControl = 'absolute right-5 w-[79px] bg-white text-[#666] shadow-md';

function MapControls() {
 return (
  <>
   <div className="absolute left-5 top-5 flex h-[79px] overflow-hidden rounded-sm bg-white font-['Roboto',sans-serif] text-4xl shadow-md">
    <button type="button" className="w-[136px] font-medium text-black">Map</button>
    <button type="button" className="w-[199px] border-l-2 border-[#f1f1f1] text-[#565656]">Satellite</button>
   </div>
   <button type="button" aria-label="Toggle fullscreen view" className={`${mapControl} top-5 flex h-[79px] items-center justify-center rounded-sm`}>
    <svg viewBox="0 0 36 36" className="size-9" fill="none" stroke="currentColor" strokeWidth="6"><path d="M3,12V3H12M24,3H33V12M33,24V33H24M12,33H3V24" /></svg>
   </button>
   <button type="button" aria-label="Map camera controls" className={`${mapControl} top-[301px] flex h-[79px] items-center justify-center rounded-full`}>
    <svg viewBox="0 0 46 46" className="size-[46px]" fill="none" stroke="currentColor" strokeWidth="5"><path d="M14,15L5,23L14,31M32,15L41,23L32,31M15,14L23,5L31,14M15,32L23,41L31,32" /></svg>
   </button>
   <button type="button" aria-label="Street View" className={`${mapControl} top-[445px] flex h-20 items-center justify-center rounded-sm`}>
    <svg viewBox="0 0 36 56" className="h-14 w-9"><circle cx="18" cy="9" r="9" fill="#fbbc04" /><path d="M8,20H28L36,38L26,40V56H10V40L0,38Z" fill="#e2a80f" stroke="#8a8272" /></svg>
   </button>
   <div className={`${mapControl} top-[589px] flex flex-col rounded-sm px-[10px]`}>
    <button type="button" aria-label="Zoom in" className="flex h-[81px] items-center justify-center border-b-2 border-[#e6e6e6]">
     <svg viewBox="0 0 34 34" className="size-[34px]" stroke="currentColor" strokeWidth="5"><path d="M0,17H34M17,0V34" /></svg>
    </button>
    <button type="button" aria-label="Zoom out" className="flex h-[81px] items-center justify-center">
     <svg viewBox="0 0 34 34" className="size-[34px]" stroke="currentColor" strokeWidth="5"><path d="M0,17H34" /></svg>
    </button>
   </div>
   <div className="absolute bottom-[6px] left-5 font-['Lato',sans-serif] text-[35px] leading-[44px] font-bold [text-shadow:0_0_3px_#fff,0_0_3px_#fff]">
    <span className="text-[#4285f4]">G</span>
    <span className="text-[#ea4335]">o</span>
    <span className="text-[#fbbc04]">o</span>
    <span className="text-[#4285f4]">g</span>
    <span className="text-[#34a853]">l</span>
    <span className="text-[#ea4335]">e</span>
   </div>
   <div className="absolute bottom-0 right-0 flex gap-px font-['Roboto',sans-serif] text-[20px] leading-[28px] text-black">
    <button type="button" className="bg-[#f5f5f5]/80 px-3">Keyboard shortcuts</button>
    <span className="bg-[#f5f5f5]/80 px-3">Map data ©2026 Google</span>
    <a href="#terms" className="bg-[#f5f5f5]/80 px-3">Terms</a>
    <a href="#report" className="bg-[#f5f5f5]/80 px-3">Report a map error</a>
   </div>
  </>
 );
}

const rentals = [
 { n: 1, number: 'R1', customer: 'John Elway', site: 'Site 1', address: ['7527 S Wheeling Ct', 'Englewood CO 80112'], start: 'Mar 23, 2026' },
 { n: 2, number: 'R2', customer: 'Selma Hayek', site: 'Site 2', address: ['8150 S Colorado Blvd', 'Suite 222'], start: 'Mar 23, 2026' },
];

const greyButton = 'flex h-[76px] items-center justify-center rounded-lg bg-[#e5e9f1] text-[#575b66]';

export default function App() {
 const [search, setSearch] = useState('');

 return (
  <div className="overflow-x-hidden bg-white pb-[59px] pl-[14px] font-['Open_Sans',sans-serif] text-[32px] leading-[44px] text-[#3c4049]">
   {/* the page runs on past the right edge of the window */}
   <div className="-mr-[74px]">
    <header className="flex items-start justify-between pt-[58px]">
     <div className="relative flex h-[109px] w-[691px] items-center justify-center bg-[#f88f14] font-['Lato',sans-serif] text-[75px] font-bold text-white">
      Inventory
      <div className="absolute left-1/2 top-full h-12 w-[58px] -translate-x-1/2 bg-[#f88f14] [clip-path:polygon(0_0,100%_0,50%_100%)]" />
     </div>
     <div className="mt-8 flex h-[62px] items-end gap-[10px] overflow-hidden text-white">
      <button type="button" className="h-[76px] w-[369px] shrink-0 rounded-lg bg-[#3f9de6]">Bulk Create Rentals</button>
      <button type="button" className="h-[76px] w-[291px] shrink-0 rounded-lg bg-[#3f9de6] pl-10 text-left">Create Rental</button>
     </div>
    </header>

    <nav className="mt-12 flex h-[102px] items-end rounded-tl-2xl bg-[#e5e9f1]">
     <a href="#list" className="flex h-[90px] w-[118px] items-center pl-[31px]">List</a>
     <a href="#map" className="flex h-[90px] w-[130px] items-center justify-center rounded-t-2xl border-2 border-[#30353e] bg-[#f4f5fa] font-bold text-[#2b6cb0]">Map</a>
     <a href="#inventory" className="flex h-[90px] w-[209px] items-center pl-9">Inventory</a>
     <div className="flex-1 border-b-2 border-[#dcdfe3]" />
    </nav>

    <div className="mt-[81px] flex items-start justify-between">
     <h1 className="text-[48px] leading-[52px] font-semibold text-[#2b6cb0]">975 In Progress Rentals</h1>
     <div className="flex gap-[21px]">
      <button type="button" disabled className={`${greyButton} w-[155px] opacity-60`}>Today</button>
      <button type="button" aria-label="Previous day" className={`${greyButton} w-[83px]`}><FaChevronLeft className="size-6" /></button>
      <button type="button" className={`${greyButton} w-[350px] gap-3`}><FaCalendar className="size-8" />Tue, Mar 31, 26</button>
      <button type="button" aria-label="Next day" className={`${greyButton} w-[83px]`}><FaChevronRight className="size-6" /></button>
     </div>
    </div>

    <section className="relative mt-[10px] h-[799px] overflow-hidden">
     <BaseMap />
     <MapControls />
    </section>

    <div className="mt-20 flex items-center">
     <label htmlFor="sort">Sort by</label>
     <div className="relative ml-[15px]">
      <select id="sort" className="h-[76px] w-[331px] appearance-none rounded-lg bg-[#e5e9f1] pl-[41px] text-[#575b66]">
       <option>Rental Number</option>
      </select>
      <svg viewBox="0 0 16 8" className="pointer-events-none absolute right-10 top-[38px] h-2 w-4" fill="#575b66"><path d="M0,0H16L8,8Z" /></svg>
     </div>
     <button type="button" aria-label="Sort ascending" className={`${greyButton} ml-[11px] w-[115px]`}><FaArrowDownAZ className="size-8" /></button>
     <input
      type="search"
      aria-label="Search"
      placeholder="Search"
      value={search}
      onChange={(e) => setSearch(e.target.value)}
      className="ml-auto h-[76px] w-[402px] rounded-l-lg border-2 border-r-0 border-[#aab3bc] pl-[22px] placeholder:text-[#9b9b9b]"
     />
     <button type="button" aria-label="Run search" className="flex h-[76px] w-[122px] items-center bg-[#e5e9f1] pl-9 text-[#575b66]"><Search className="size-9" strokeWidth={3} /></button>
    </div>

    <ul className="mt-10 h-[358px] overflow-hidden">
     {rentals.map((rental) => (
      <li key={rental.n} className="grid h-[222px] grid-cols-[78px_368fr_670fr_447fr_779fr_278px] border-t-[3px] border-[#b0b7bd] pt-[33px]">
       <span className="mt-[9px] flex size-[60px] items-center justify-center rounded-full bg-[#338362] font-bold text-white">{rental.n}</span>
       <div>
        <a href={`#${rental.number}`} className="flex items-center gap-2 pl-1 text-[#2b74b8]">
         <svg viewBox="0 0 13 22" className="h-[22px] w-[13px]" fill="#2b6cb0"><path d="M0,2Q0,0 2,0Q5,0 12,9Q14,11 12,13Q5,22 2,22Q0,22 0,20Z" /></svg>
         {rental.number}
        </a>
        <p>{rental.customer}</p>
       </div>
       <div>
        <p className="font-bold text-[#2f333b]">{rental.site}</p>
        {rental.address.map((line) => <p key={line}>{line}</p>)}
       </div>
       <div>
        <p className="font-bold text-[#2f333b]">Start Date</p>
        <p>{rental.start}</p>
       </div>
       <div>
        <p className="font-bold text-[#2f333b]">End Date</p>
        <a href="#pickup" className="text-[#2b74b8] underline">Schedule Pickup</a>
       </div>
       <div className="flex h-[66px] justify-end gap-[2px] text-[28px] text-[#575b66]">
        <button type="button" className="w-[201px] rounded-l-lg bg-[#e5e9f1]">View Rental</button>
        <button type="button" aria-label="More actions" className="flex w-[75px] items-center justify-center rounded-r-lg bg-[#e5e9f1]">
         <svg viewBox="0 0 16 8" className="h-2 w-4" fill="currentColor"><path d="M0,0H16L8,8Z" /></svg>
        </button>
       </div>
      </li>
     ))}
    </ul>
   </div>
  </div>
 );
}
